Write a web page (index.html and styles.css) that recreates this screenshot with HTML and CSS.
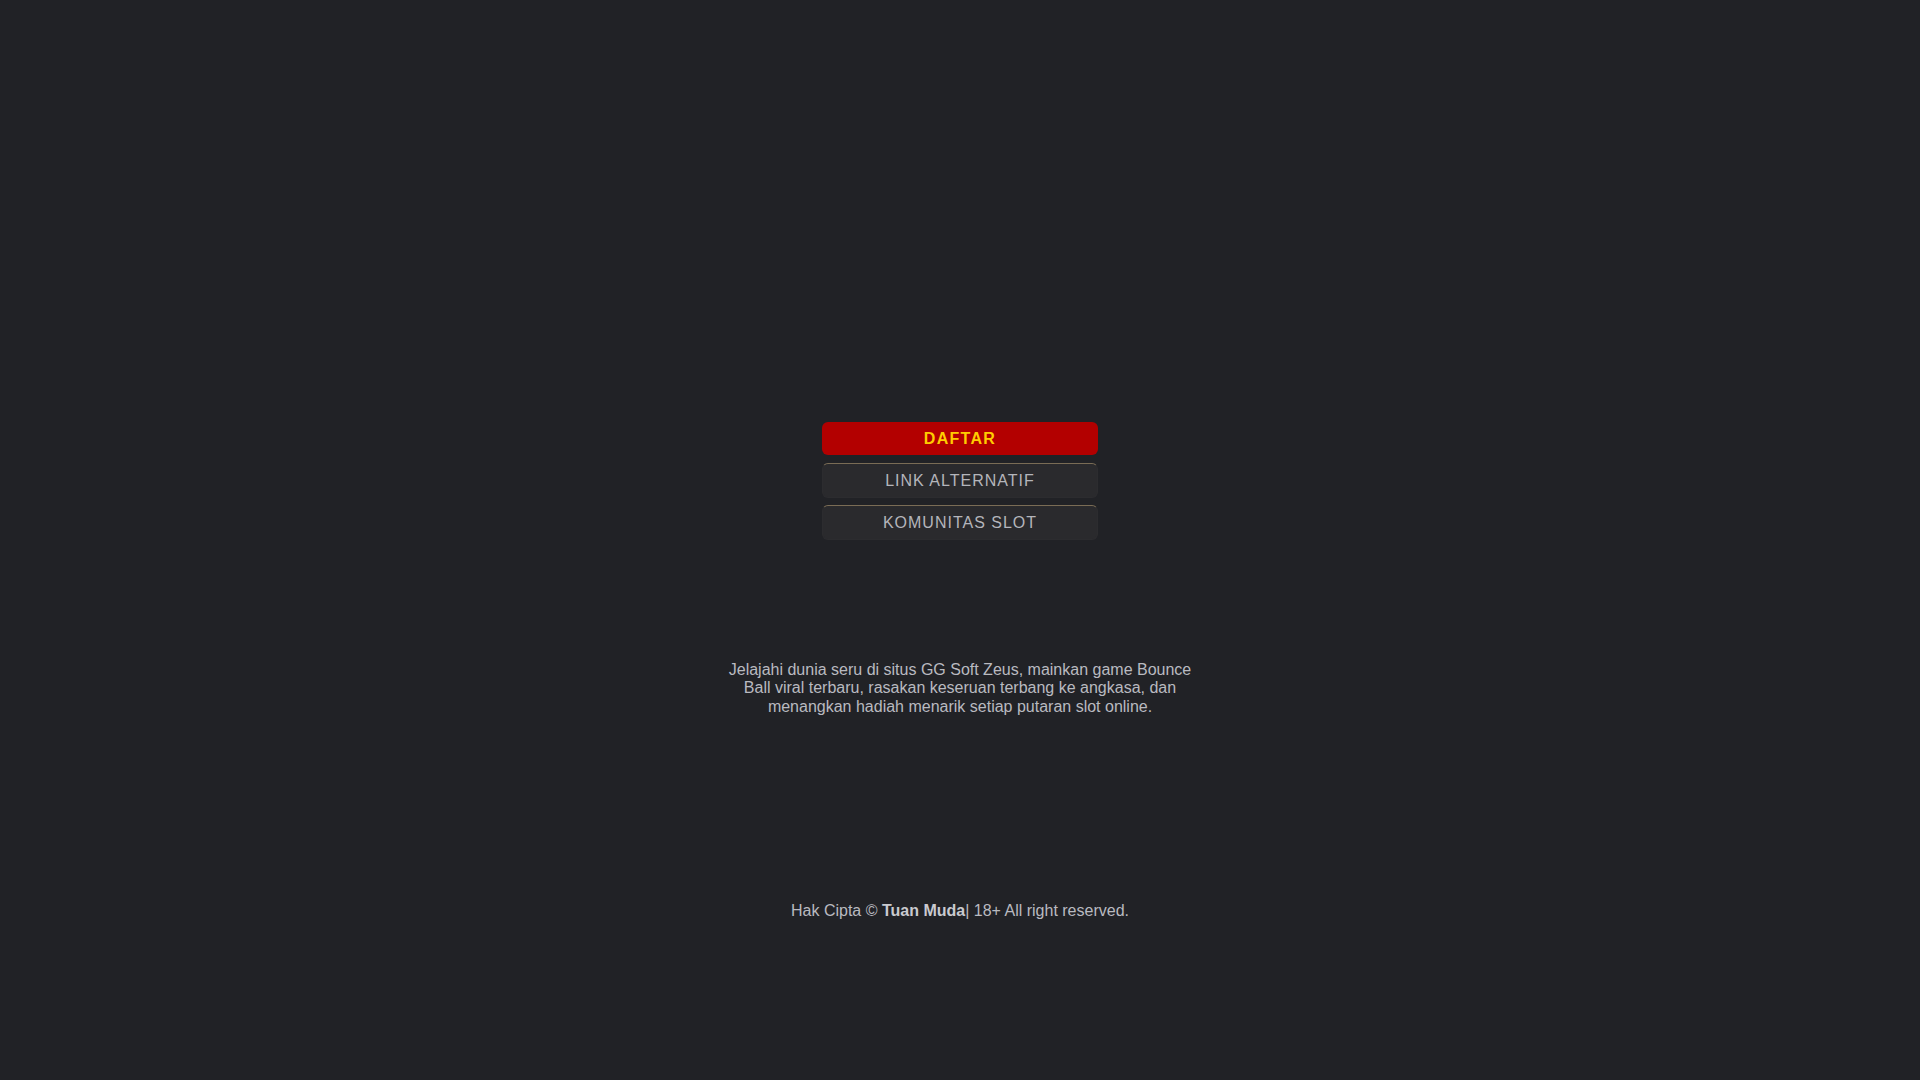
FILE: index.html
```html
<!DOCTYPE html>
<html lang="id">
<head>
<meta charset="utf-8">
<title>GG Soft Zeus</title>
<link rel="stylesheet" href="styles.css">
</head>
<body>
<main class="page">
  <nav class="buttons">
    <a class="btn btn-primary" href="#">DAFTAR</a>
    <a class="btn btn-dark" href="#">LINK ALTERNATIF</a>
    <a class="btn btn-dark" href="#">KOMUNITAS SLOT</a>
  </nav>
  <p class="desc">Jelajahi dunia seru di situs GG Soft Zeus, mainkan game Bounce Ball viral terbaru, rasakan keseruan terbang ke angkasa, dan menangkan hadiah menarik setiap putaran slot online.</p>
  <footer class="footer">Hak Cipta © <strong>Tuan Muda</strong>| 18+ All right reserved.</footer>
</main>
</body>
</html>
```

FILE: styles.css
```css
html, body {
  margin: 0;
  padding: 0;
  background: #212226;
  height: 100%;
}
body {
  font-family: "Liberation Sans", Arial, sans-serif;
  color: #b9bac0;
}
.page {
  display: flex;
  flex-direction: column;
  align-items: center;
  padding-top: 422px;
}
.buttons {
  width: 276px;
  display: flex;
  flex-direction: column;
  gap: 7.5px;
}
.btn {
  display: block;
  text-align: center;
  text-decoration: none;
  font-size: 16px;
  line-height: 19px;
  letter-spacing: 1px;
  border-radius: 6px;
  padding: 7px 0;
}
.btn-primary {
  background: #b30000;
  color: #ffcc00;
  font-weight: bold;
  letter-spacing: 1.3px;
}
.btn-dark {
  background: #2a2a2d;
  color: #b4b5bb;
  border: 1px solid #2c2c2f;
  border-top-color: #7a6c55;
}
.desc {
  width: 480px;
  margin: 121px 0 0;
  text-align: center;
  font-size: 16px;
  line-height: 18.4px;
}
.footer {
  margin-top: 186px;
  font-size: 16px;
  line-height: 18px;
  text-align: center;
}
.footer strong {
  color: #c9cacf;
}
```
